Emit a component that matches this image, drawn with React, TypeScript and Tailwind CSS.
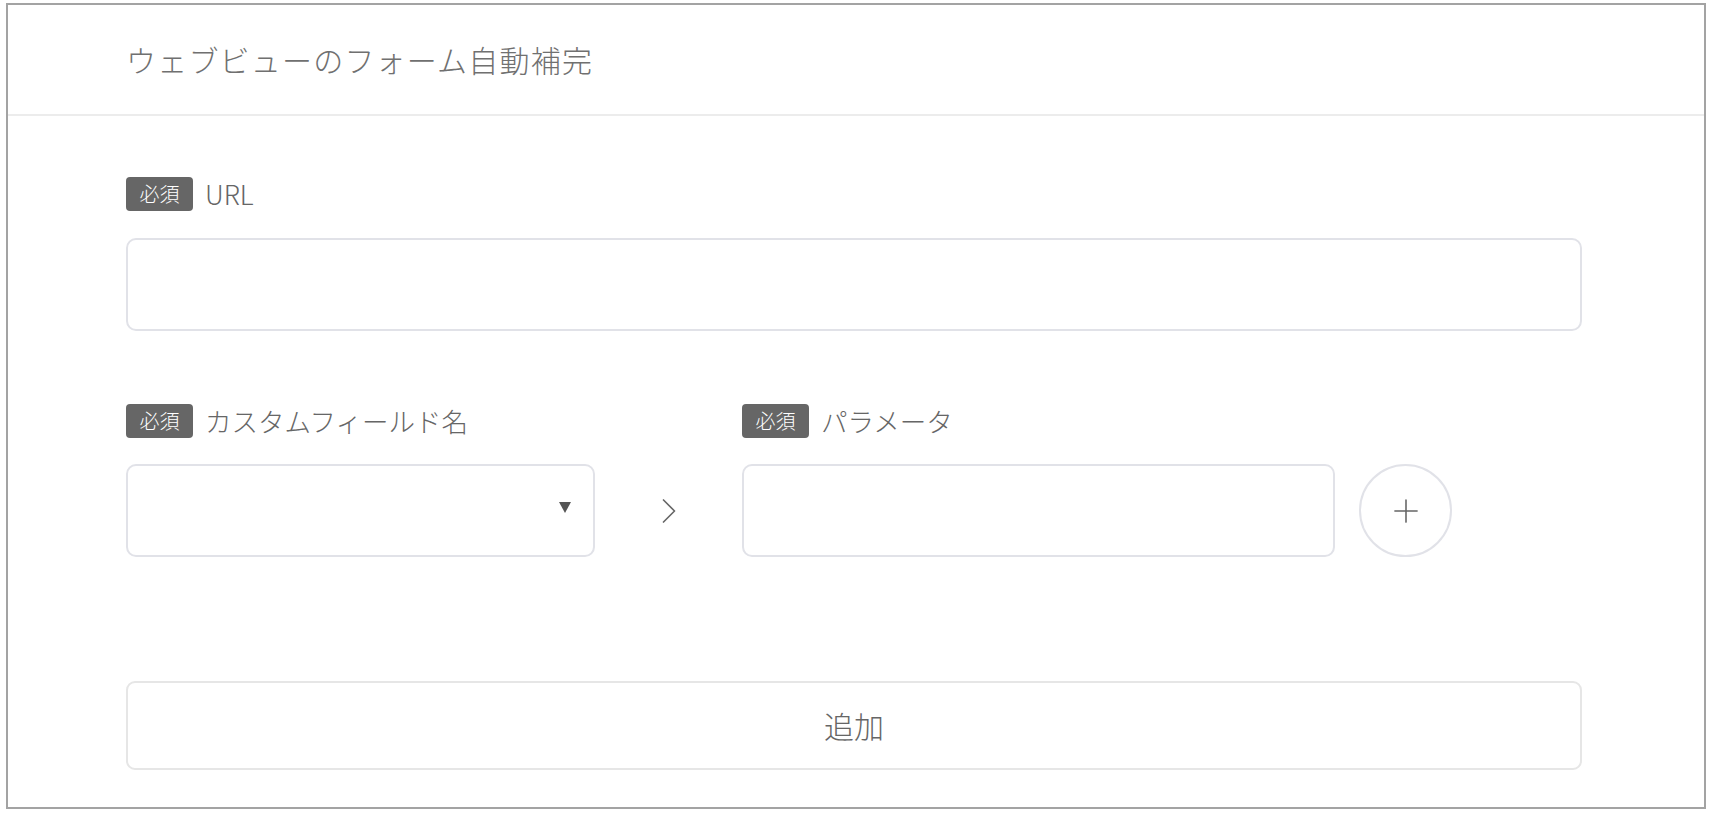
import { ChevronRight, Plus } from "lucide-react";

function RequiredLabel({ text }: { text: string }) {
  return (
    <div className="flex items-center gap-[12px] h-[34px]">
      <span className="flex h-[34px] w-[67px] items-center justify-center rounded-[4px] bg-[#666666] text-[20px] font-light text-white">
        必須
      </span>
      <span className="text-[26.5px] font-light leading-none text-[#666666]">{text}</span>
    </div>
  );
}

export default function App() {
  return (
    <div className="h-[816px] w-full bg-white pl-[6px] pt-[3px] font-['Noto_Sans_CJK_JP','Noto_Sans',sans-serif]">
      <div className="flex h-[806px] w-[1700px] flex-col border-2 border-[#a3a3a3] bg-white">
        {/* header */}
        <div className="flex h-[111px] items-center border-b-2 border-[#ececec] pl-[118px]">
          <h1 className="text-[30px] font-light tracking-[1.2px] text-[#707070]">
            ウェブビューのフォーム自動補完
          </h1>
        </div>

        {/* body */}
        <div className="flex flex-col pl-[118px] pr-[122px] pt-[61px]">
          <RequiredLabel text="URL" />
          <input
            type="text"
            className="mt-[27px] h-[93px] w-full rounded-[10px] border-2 border-[#e1e2e8] bg-white px-4 outline-none"
          />

          <div className="mt-[73px] flex items-end">
            <div className="flex w-[469px] flex-col gap-[26px]">
              <RequiredLabel text="カスタムフィールド名" />
              <div className="relative flex h-[93px] items-center rounded-[10px] border-2 border-[#e1e2e8] bg-white">
                <span className="absolute right-[22px] top-[36px] h-0 w-0 border-x-[6px] border-t-[11px] border-x-transparent border-t-[#555555]" />
              </div>
            </div>

            <div className="flex h-[93px] w-[147px] items-center justify-center">
              <ChevronRight className="h-[44px] w-[44px] text-[#666666]" strokeWidth={0.9} />
            </div>

            <div className="flex w-[593px] flex-col gap-[26px]">
              <RequiredLabel text="パラメータ" />
              <input
                type="text"
                className="h-[93px] w-full rounded-[10px] border-2 border-[#e1e2e8] bg-white px-4 outline-none"
              />
            </div>

            <button className="ml-[24px] flex h-[93px] w-[93px] items-center justify-center rounded-full border-2 border-[#e1e2e8] bg-white">
              <Plus className="h-[38px] w-[38px] text-[#666666]" strokeWidth={1} />
            </button>
          </div>

          <button className="mt-[124px] flex h-[89px] w-full items-center justify-center rounded-[9px] border-2 border-[#e6e6e6] bg-white text-[30px] font-light text-[#666666]">
            追加
          </button>
        </div>
      </div>
    </div>
  );
}
